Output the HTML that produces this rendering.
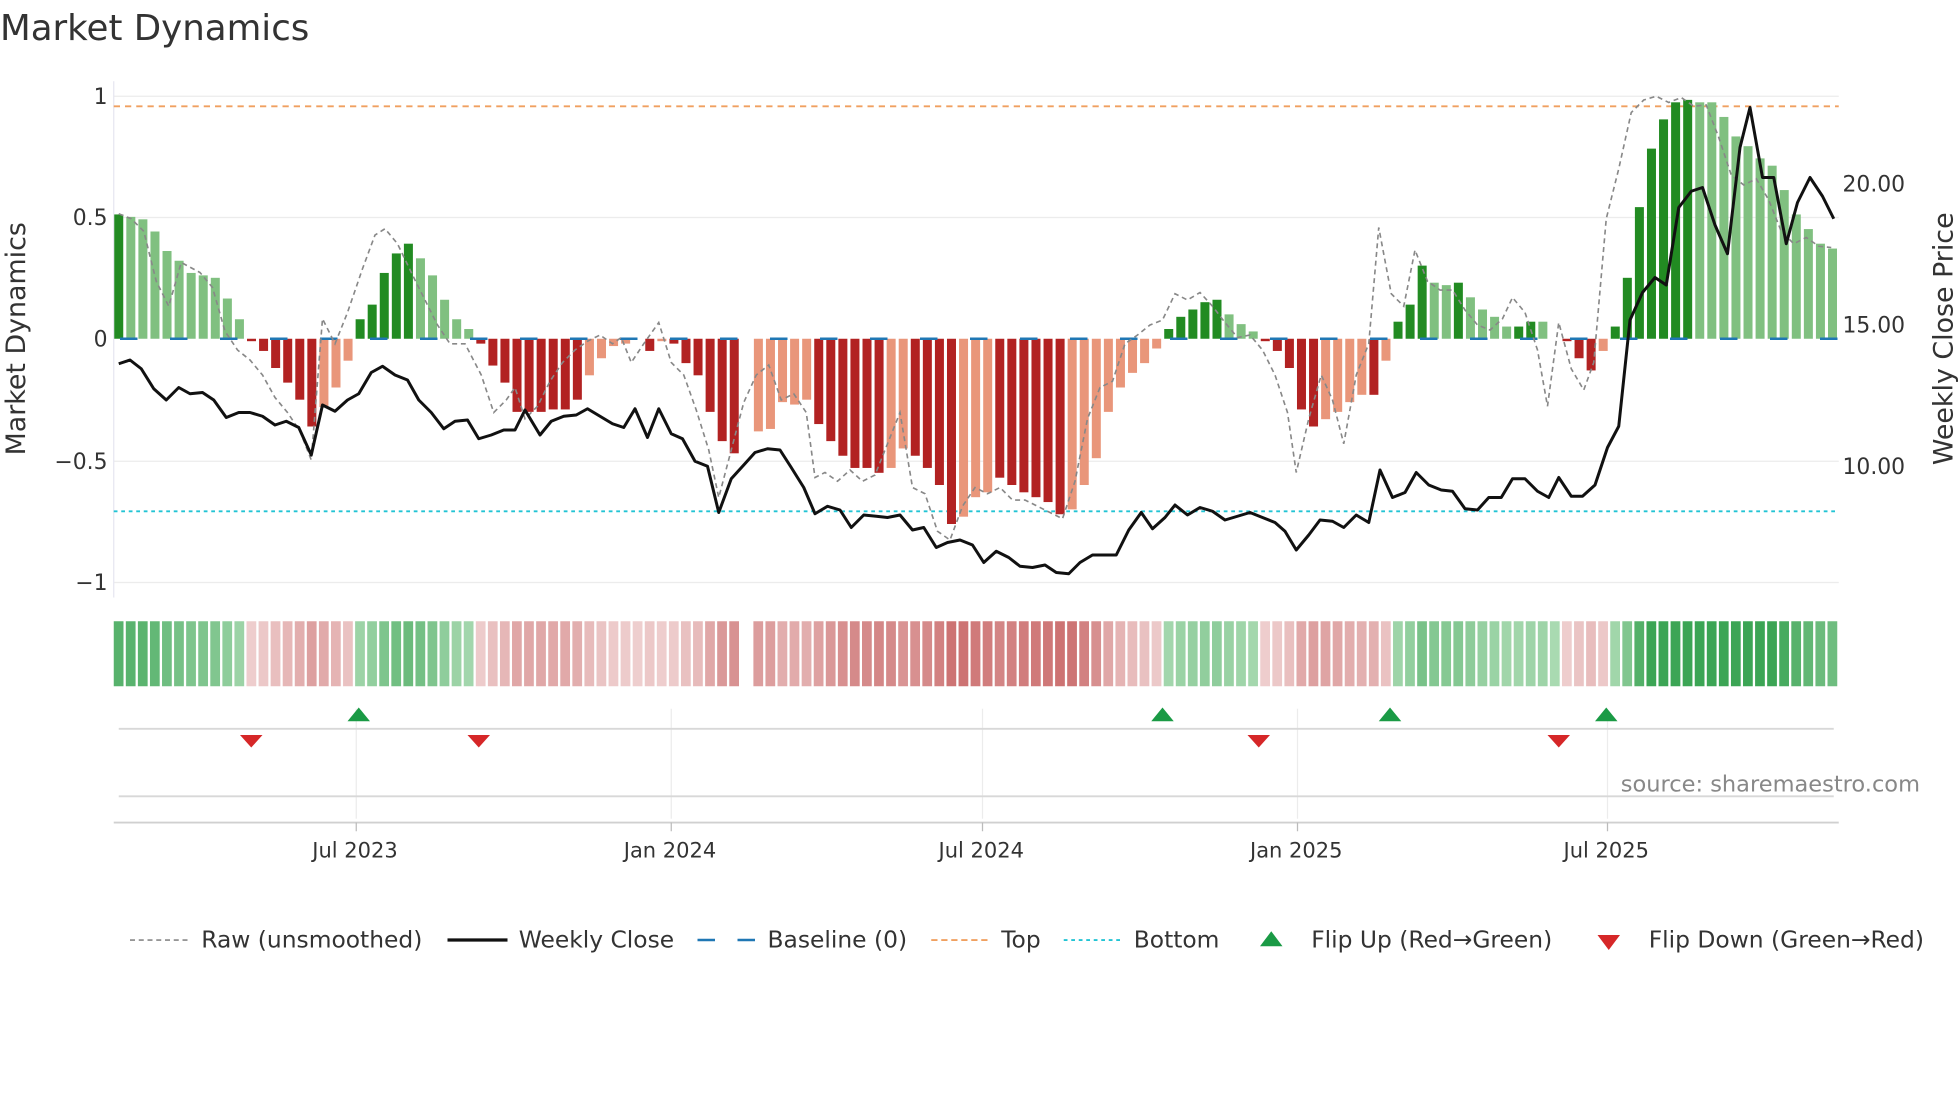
<!DOCTYPE html>
<html><head><meta charset="utf-8"><style>
html,body{margin:0;padding:0;background:#fff;width:1960px;height:1102px;overflow:hidden}
svg{display:block;font-family:"DejaVu Sans","Liberation Sans",sans-serif}
</style></head><body>
<svg id="s" width="1960" height="1102" viewBox="0 0 1568 881.6" xmlns="http://www.w3.org/2000/svg">
<rect width="1568" height="882" fill="#fff"/>
<text x="0" y="32" font-size="28.5" fill="#333">Market Dynamics</text>
<g stroke="#ececec" stroke-width="1">
<line x1="91" y1="77" x2="1471" y2="77"/><line x1="91" y1="174" x2="1471" y2="174"/>
<line x1="91" y1="369" x2="1471" y2="369"/><line x1="91" y1="466" x2="1471" y2="466"/>
</g>
<line x1="91" y1="65" x2="91" y2="478" stroke="#e6e6f0" stroke-width="1"/>
<g font-size="17.5" fill="#333" text-anchor="end">
<text x="86" y="83">1</text><text x="86" y="180">0.5</text><text x="86" y="277">0</text>
<text x="86" y="375">−0.5</text><text x="86" y="472">−1</text>
</g>
<g font-size="17.5" fill="#333">
<text x="1474" y="153">20.00</text><text x="1474" y="266">15.00</text><text x="1474" y="379">10.00</text>
</g>
<text transform="translate(20,271) rotate(-90)" font-size="21.5" fill="#333" text-anchor="middle">Market Dynamics</text>
<text transform="translate(1562,271) rotate(-90)" font-size="21.5" fill="#333" text-anchor="middle">Weekly Close Price</text>
<line x1="91" y1="85" x2="1471" y2="85" stroke="#f0a060" stroke-width="1.5" stroke-dasharray="5,4"/>
<line x1="91" y1="409" x2="1471" y2="409" stroke="#22c4d4" stroke-width="1.5" stroke-dasharray="3,3"/>
<g id="bars"></g>
<line x1="96" y1="271" x2="1471" y2="271" stroke="#1f77b4" stroke-width="2" stroke-dasharray="14,26"/>
<polyline id="raw" fill="none" stroke="#888" stroke-width="1.3" stroke-dasharray="4,3"/>
<polyline id="close" fill="none" stroke="#111" stroke-width="2.4" stroke-linejoin="round"/>
<g id="heat"></g>
<g stroke="#ececec" stroke-width="1">
<line x1="285" y1="567" x2="285" y2="655"/><line x1="537" y1="567" x2="537" y2="655"/>
<line x1="786" y1="567" x2="786" y2="655"/><line x1="1038" y1="567" x2="1038" y2="655"/>
<line x1="1286" y1="567" x2="1286" y2="655"/>
</g>
<line x1="95" y1="583" x2="1467" y2="583" stroke="#d8d8d8" stroke-width="1.5"/>
<line x1="95" y1="637" x2="1467" y2="637" stroke="#d8d8d8" stroke-width="1.5"/>
<line x1="91" y1="658" x2="1471" y2="658" stroke="#d0d0d0" stroke-width="1.5"/>
<g stroke="#bbb"><line x1="285" y1="658" x2="285" y2="665"/><line x1="537" y1="658" x2="537" y2="665"/><line x1="786" y1="658" x2="786" y2="665"/><line x1="1038" y1="658" x2="1038" y2="665"/><line x1="1286" y1="658" x2="1286" y2="665"/></g>
<g fill="#1a9a45"><path d="M278,577 L287,566 L296,577Z"/><path d="M921,577 L930,566 L939,577Z"/><path d="M1103,577 L1112,566 L1121,577Z"/><path d="M1276,577 L1285,566 L1294,577Z"/></g>
<g fill="#d62728"><path d="M192,588 L210,588 L201,598Z"/><path d="M374,588 L392,588 L383,598Z"/><path d="M998,588 L1016,588 L1007,598Z"/><path d="M1238,588 L1256,588 L1247,598Z"/></g>
<text x="1536" y="633" font-size="18" fill="#888" text-anchor="end">source: sharemaestro.com</text>
<g font-size="16.8" fill="#333" text-anchor="middle">
<text x="284" y="686">Jul 2023</text><text x="536" y="686">Jan 2024</text><text x="785" y="686">Jul 2024</text>
<text x="1037" y="686">Jan 2025</text><text x="1285" y="686">Jul 2025</text>
</g>
<g font-size="18.7" fill="#333">
<line x1="104" y1="752" x2="150" y2="752" stroke="#888" stroke-width="1.3" stroke-dasharray="4,3"/>
<text x="161" y="758">Raw (unsmoothed)</text>
<line x1="358" y1="752" x2="406" y2="752" stroke="#111" stroke-width="2.6"/>
<text x="415" y="758">Weekly Close</text>
<line x1="558" y1="752" x2="604" y2="752" stroke="#1f77b4" stroke-width="2" stroke-dasharray="14,18"/>
<text x="614" y="758">Baseline (0)</text>
<line x1="745" y1="752" x2="791" y2="752" stroke="#f0a060" stroke-width="1.5" stroke-dasharray="5,3"/>
<text x="801" y="758">Top</text>
<line x1="851" y1="752" x2="897" y2="752" stroke="#22c4d4" stroke-width="1.5" stroke-dasharray="3,3"/>
<text x="907" y="758">Bottom</text>
<path d="M1008,757 L1017,745 L1026,757Z" fill="#1a9a45"/>
<text x="1049" y="758">Flip Up (Red→Green)</text>
<path d="M1278,748 L1296,748 L1287,760Z" fill="#d62728"/>
<text x="1319" y="758">Flip Down (Green→Red)</text>
</g>
</svg>
<script>
(function(){
var B="0.51G .50g .49g .44g .36g .32g .27g .26g .25g .165g .08g -.01R -.05R -.12R -.18R -.25R -.36R -.28r -.2r -.09r .08G .14G .27G .35G .39G .33g .26g .16g .08g .04g -.02R -.11R -.18R -.3R -.3R -.3R -.29R -.29R -.25R -.15r -.08r -.03r -.02r 0r -.05R -.01r -.02R -.1R -.15R -.3R -.42R -.47R X -.38r -.37r -.26r -.27r -.25r -.35R -.42R -.48R -.53R -.53R -.55R -.53r -.45r -.48R -.53R -.6R -.76R -.73r -.65r -.63r -.57R -.6R -.63R -.65R -.67R -.72R -.7r -.6r -.49r -.3r -.2r -.14r -.1r -.04r .04G .09G .12G .15G .16G .1g .06g .03g -.01R -.05R -.12R -.29R -.36R -.33r -.3r -.26r -.23r -.23R -.09r .07G .14G .3G .23g .22g .23G .17g .12g .09g .05g .05G .07G .07g 0g -.01R -.08R -.13R -.05r .05G .25G .54G .78G .9G .97G .98G .97g .97g .91g .83g .79g .74g .71g .61g .51g .45g .39g .37g".split(" ");
var col={G:"#228b22",g:"#80c080",R:"#b22222",r:"#e9967a"};
var n=B.length,x0=95,x1=1466,dx=(x1-x0)/(n-1),bh="",hh="";
for(var i=0;i<n;i++){var t=B[i],x=x0+dx*i;if(t=="X")continue;var c=t.slice(-1),v=parseFloat(t);
var y=271-195*v,ty=Math.min(y,271),h=Math.abs(271-y);
if(h>0.3)bh+='<rect x="'+(x-3.6)+'" y="'+ty+'" width="7.2" height="'+h+'" fill="'+col[c]+'"/>';
var a=Math.abs(v),f,k;
if(c=="G"||c=="g"){k=Math.min(1,0.25+a*1.1);f="rgb("+Math.round(205-(205-60)*k)+","+Math.round(235-(235-165)*k)+","+Math.round(208-(208-85)*k)+")";}
else{k=Math.min(1,0.15+a*1.2);f="rgb("+Math.round(244-(244-205)*k)+","+Math.round(222-(222-115)*k)+","+Math.round(222-(222-115)*k)+")";}
hh+='<rect x="'+(x-4)+'" y="497" width="7.8" height="52" fill="'+f+'"/>';}
document.getElementById("bars").innerHTML=bh;document.getElementById("heat").innerHTML=hh;
document.getElementById("close").setAttribute("points","95,291 104,288 113,295 123,311 133,320 143,310 152,315 162,314 171,320 181,334 191,330 200,330 210,333 220,340 229,337 239,342 249,364 258,324 268,329 278,320 287,315 297,298 306,293 316,300 326,304 335,320 345,330 355,343 364,337 374,336 383,351 393,348 403,344 412,344 420,328 432,348 441,337 451,333 461,332 470,327 480,333 490,339 499,342 508,327 518,350 527,327 537,347 546,351 556,369 566,373 575,410 585,383 595,372 604,362 614,359 624,360 633,374 643,390 652,411 662,405 672,408 681,422 691,412 701,413 710,414 720,412 730,424 739,422 749,438 758,434 768,432 778,436 787,450 797,441 807,446 816,453 826,454 836,452 845,458 855,459 864,450 874,444 884,444 893,444 903,424 913,410 922,423 932,414 940,404 950,412 960,406 970,409 980,416 990,413 1000,410 1010,414 1020,418 1028,425 1037,440 1047,428 1056,416 1066,417 1075,422 1085,412 1095,418 1104,376 1114,398 1124,394 1133,378 1143,388 1153,392 1162,393 1172,407 1182,408 1191,398 1201,398 1210,383 1220,383 1230,393 1239,398 1247,382 1257,397 1266,397 1276,388 1286,358 1295,341 1304,256 1314,234 1324,222 1333,228 1343,166 1353,153 1362,150 1372,180 1382,203 1392,118 1400,86 1410,142 1419,142 1429,195 1438,162 1448,142 1458,157 1467,175");
document.getElementById("raw").setAttribute("points","95,171 105,175 115,185 125,225 135,245 145,210 160,218 170,230 180,265 190,280 200,288 210,300 220,318 230,330 240,345 249,368 258,255 268,275 278,250 290,215 300,188 308,183 318,195 330,220 340,240 350,260 360,275 372,275 385,300 395,330 405,320 412,310 420,335 430,325 440,305 450,290 460,280 470,273 480,268 490,275 497,270 505,290 515,275 527,258 537,290 547,300 557,328 567,360 575,398 585,360 595,322 605,300 615,292 625,320 635,315 645,330 652,382 660,378 670,385 680,376 690,385 700,380 710,355 720,330 730,390 740,395 750,425 760,432 770,405 780,390 790,395 800,390 810,400 820,400 830,405 840,410 850,415 860,385 870,335 880,310 890,305 900,275 910,268 920,260 930,256 940,235 950,240 960,234 970,245 980,258 990,270 1000,268 1010,280 1020,300 1030,330 1037,378 1047,335 1057,300 1066,320 1075,355 1085,300 1095,275 1103,182 1113,235 1123,245 1132,200 1142,225 1152,232 1162,232 1172,248 1182,260 1192,264 1202,255 1210,238 1220,250 1230,280 1238,325 1247,258 1257,295 1267,312 1275,290 1285,175 1295,135 1305,90 1315,80 1325,77 1335,82 1345,78 1355,85 1365,84 1375,110 1385,140 1395,148 1405,143 1415,160 1425,185 1435,195 1445,190 1455,197 1465,198");
})();
</script>
</body></html>
